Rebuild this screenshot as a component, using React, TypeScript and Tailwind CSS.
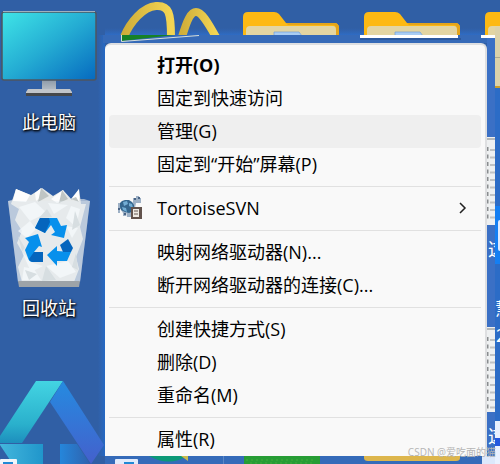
import { Fragment } from "react";
import type { ReactNode } from "react";

const MENU_GROUPS: { label: string; bold?: boolean; active?: boolean; submenu?: boolean }[][] = [
  [
    { label: "打开(O)", bold: true },
    { label: "固定到快速访问" },
    { label: "管理(G)", active: true },
    { label: "固定到“开始”屏幕(P)" },
  ],
  [{ label: "TortoiseSVN", submenu: true }],
  [{ label: "映射网络驱动器(N)..." }, { label: "断开网络驱动器的连接(C)..." }],
  [{ label: "创建快捷方式(S)" }, { label: "删除(D)" }, { label: "重命名(M)" }],
  [{ label: "属性(R)" }],
];

const DOC_LINES = [0, 1, 2, 3, 4, 5, 6, 7, 8, 9];

function Thumbnail({ y, height }: { y: number; height: number }) {
  return (
    <g>
      <rect x="487" y={y} width="8" height={height} fill="#eef0f1" />
      <rect x="487" y={y + 1} width="8" height="2" fill="#b4b8ba" />
      {DOC_LINES.map((i) => (
        <g key={i}>
          <rect x="487" y={y + 10 + i * 7.5} width="1.5" height="4" fill="#8a8d90" />
          <rect x="490" y={y + 12 + i * 7.5} width="5" height="2" fill="#bfc2c4" />
        </g>
      ))}
    </g>
  );
}

function Folder({ x }: { x: number }) {
  return (
    <g transform={`translate(${x} 12)`}>
      <path d="M0 24V5q0-5 5-5h26q3 0 5 2l7 9h48q5 0 5 5v8z" fill="#fdb913" />
      <path d="M43 11h48q5 0 5 5v8h-3v-8q0-3-4-3H45z" fill="#e4a51c" />
      <path d="M3 24v-6q0-4 4-4h83q3 0 3 4v6z" fill="#e3d5a2" />
      <path d="M31 24v-4h25l3 4z" fill="#a9cdf3" stroke="#6f9fd8" strokeWidth=".7" />
    </g>
  );
}

function Wallpaper() {
  return (
    <svg className="absolute left-0 top-0" width="500" height="464" viewBox="0 0 500 464" aria-hidden="true">
      <defs>
        <linearGradient id="glow" x1="0" x2="1" y1="0" y2="0">
          <stop offset="0" stopColor="#2f6bc0" stopOpacity="0" />
          <stop offset="1" stopColor="#2468c4" />
        </linearGradient>
        <linearGradient id="topGlow" x1="0" x2="0" y1="0" y2="1">
          <stop offset="0" stopColor="#3268b8" stopOpacity="0" />
          <stop offset="1" stopColor="#2e6cc5" />
        </linearGradient>
        <linearGradient id="ring" x1="0" x2="1" y1="0" y2="0">
          <stop offset="0" stopColor="#cfae3a" />
          <stop offset="1" stopColor="#f3d553" />
        </linearGradient>
        <linearGradient id="tealLeg" x1="0" x2="0" y1="0" y2="1">
          <stop offset="0" stopColor="#43d4e2" />
          <stop offset=".7" stopColor="#2ab0cc" />
          <stop offset="1" stopColor="#1d8ebd" />
        </linearGradient>
        <linearGradient id="blueLeg" x1="0" x2="0" y1="0" y2="1">
          <stop offset="0" stopColor="#258be0" />
          <stop offset="1" stopColor="#4460cc" />
        </linearGradient>
        <linearGradient id="tealBar" x1="0" x2="1" y1="0" y2="0">
          <stop offset="0" stopColor="#43b6dc" />
          <stop offset="1" stopColor="#2096cb" />
        </linearGradient>
        <linearGradient id="blueBar" x1="0" x2="1" y1="0" y2="0">
          <stop offset="0" stopColor="#2586db" />
          <stop offset="1" stopColor="#2f62ad" />
        </linearGradient>
        <clipPath id="strip">
          <rect x="487" y="225" width="8" height="225" />
        </clipPath>
      </defs>

      <rect x="98" y="35" width="7" height="421" fill="url(#glow)" />
      <rect x="105" y="28" width="395" height="7" fill="url(#topGlow)" />
      <g fill="none" stroke="url(#ring)" strokeWidth="8">
        <path d="M124 37C130 22 143 7 156 6C169 5 171 13 171 37" />
        <path d="M182 37C187 20 191 12 196 12C202 12 208 23 216 37" />
      </g>
      <Folder x={243} />
      <Folder x={364} />
      <Folder x={485} />
      <rect x="103" y="35" width="397" height="8" fill="#366ab8" />
      <path d="M121 35h53l-52 6h-1z" fill="#168126" />
      <path d="M121.500 35v6.500L199 35.500" fill="none" stroke="#d6dfdb" strokeWidth="1" />
      <rect x="360" y="38" width="101" height="2" fill="#264f8b" opacity=".6" />
      <rect x="360" y="35" width="98" height="3" fill="#fff" />
      <rect x="481" y="35" width="14" height="3" fill="#fff" />

      <rect x="487" y="38" width="8" height="426" fill="#3b70c5" />
      <rect x="495" y="88" width="5" height="376" fill="#2c6cc6" />
      <rect x="495" y="27" width="5" height="61" fill="#dcd2aa" />
      <rect x="495" y="57" width="5" height="1" fill="#b0aa8e" />
      <rect x="495" y="86" width="5" height="2" fill="#c99d2b" />
      <Thumbnail y={137} height={88} />
      <Thumbnail y={327} height={85} />
      <rect x="495" y="206" width="5" height="58" fill="#157ff2" />
      <rect x="498" y="220" width="4" height="31" rx="2" fill="#dfeaff" />
      <g fill="#fff" className="font-['Noto_Sans_CJK_SC',sans-serif] text-lg">
        <text x="488" y="256" clipPath="url(#strip)">这</text>
        <text x="488" y="443" clipPath="url(#strip)">这</text>
        <text x="495" y="316">慧</text>
        <text x="496" y="342">2</text>
      </g>

      <rect x="105" y="456" width="382" height="8" fill="#356bb9" />
      <path d="M149 456h38q-18 11-38 0" fill="#0c9977" />
      <path d="M181 456h7v5z" fill="#c9bb4c" />
      <path d="M223.500 456v8" stroke="#5b87c5" />
      <rect x="244" y="456" width="76" height="8" fill="#279d35" />
      <path d="M246 460h70M250 463h64" stroke="#45ad3d" strokeDasharray="2 3" />
      <path d="M364 456h96v2q0 3-4 3h-88q-4 0-4-3z" fill="#ddb64d" />
      <rect x="482" y="456" width="18" height="8" fill="#dce8fb" />
      <rect x="495" y="421" width="5" height="43" fill="#e9f1ff" />
      <rect x="495" y="438" width="5" height="8" fill="#2458df" />

      <path d="M36 381h27L22 443H0v-7z" fill="url(#tealLeg)" />
      <path d="M63 381L104 445L91 464L50 402z" fill="url(#blueLeg)" />
      <path d="M0 444h43v20H0z" fill="url(#tealBar)" />
      <path d="M0 445L10 460H0z" fill="#315fa5" />
      <path d="M60 444h17l13 20H60z" fill="url(#blueBar)" />
      <rect x="0" y="459" width="17" height="7" rx="1" fill="#f0f5fa" />
      <rect x="3" y="462" width="10" height="2" fill="#2089d5" />
      <rect x="115" y="459" width="23" height="7" rx="1" fill="#e1ebfb" />
      <rect x="124" y="462" width="10" height="2" fill="#2089d5" />
    </svg>
  );
}

function ComputerIcon() {
  return (
    <svg width="98" height="96" viewBox="0 0 98 96" aria-hidden="true">
      <defs>
        <linearGradient id="screen" x1="0" y1="0" x2="1" y2="1">
          <stop offset="0" stopColor="#3fe5e7" />
          <stop offset=".5" stopColor="#24acd3" />
          <stop offset="1" stopColor="#0669bf" />
        </linearGradient>
        <linearGradient id="stand" x1="0" y1="0" x2="0" y2="1">
          <stop offset="0" stopColor="#8d9aa8" />
          <stop offset="1" stopColor="#b9c0c8" />
        </linearGradient>
      </defs>
      <rect x="42" y="72" width="14" height="11" fill="url(#stand)" />
      <path d="M28 81h42l2 3v2H26v-2z" fill="#c1c5ca" />
      <rect x="26" y="85" width="46" height="3" fill="#46484b" />
      <rect x="2" y="4" width="94" height="68" rx="2" fill="url(#screen)" stroke="#4d5660" strokeWidth="1.500" />
      <path d="M3 3.500h92" stroke="#a1afbd" />
    </svg>
  );
}

function RecycleBinIcon() {
  return (
    <svg width="98" height="103" viewBox="0 0 98 103" aria-hidden="true">
      <path d="M8 14l7-2h69l6 2-10 81H18z" fill="#a3b6d0" />
      <path d="M11 17L16 2L31 8L42 1L53 9L63 3L72 13L79 2L81 17L86 17L80 40L83 52L76 70L79 82L74 95H22L18 80L24 68L17 56L22 44L15 33L19 22z" fill="#e6e9e9" />
      <path d="M16 2l14 6-4 7-13-1zM35 6l6-5 3 7-8 6zM51 12l12-9 3 9-9 4zM71 12l8-10v12z" fill="#fdfdfd" />
      <path d="M41 1l8 8-11 6zM62 3l6 9-9 4zM71 12l5-2 3 5z" fill="#bfc5c4" />
      <path d="M19 20l16-5 12 11-17 8zM48 16l20 2-14 9zM71 19l9 3-4 18-10-9zM18 44l12-10 6 8-9 9zM66 39l12 2-6 10zM22 65l11 11 10 3-12 6zM46 79l22-5 8 11-16 6zM24 80l10 2 7 11H22z" fill="#fff" opacity=".75" />
      <path d="M47 22l5 8-13 1zM75 24l5 14-8 5zM18 49l7 12-3 3zM76 66l-4 14 6 3zM46 79l10 14-14 1zM25 83l12 4-8 6z" fill="#cfd6d7" />
      <path d="M8 14h82L80 95H18z" fill="#e6edf4" opacity=".35" />
      <path d="M18 94h62l-1 6H19z" fill="#9da3a8" />
      <path d="M40 31h17l4 8 6-1-3 13-13-3 4-3-4-7-6 8-10-5z" fill="#0790ec" />
      <path d="M40 31h9l1 4-5 11-10-5z" fill="#0565bd" />
      <path d="M25 51l13-4 4 13-3-1-5 6h9v10H33q-4 0-5-4l-3-8 4-8z" fill="#0790ec" />
      <path d="M34 65h9v10H33q-3 0-4-3z" fill="#0565bd" />
      <path d="M47 68l10-9v5l14 1-4 9H57v5z" fill="#0790ec" />
      <path d="M60 58l8-6 5 9-2 4h-8z" fill="#0565bd" />
    </svg>
  );
}

function TortoiseIcon() {
  return (
    <svg width="26" height="26" viewBox="0 0 26 26" aria-hidden="true">
      <path d="M16 6V3h3V1h3v2h2v5h-5l-1 5h-3zM1 11h4v3H3v4H1zM4 15h5v6H6v-3zM9 16h5v6h-4zM1 8h3v4H1z" fill="#9db0c5" />
      <path d="M3 10V8l2-2 3-1h4l3 2 2 3v6l-5 2-4-1-4-2-1-3z" fill="#34668e" />
      <path d="M6 7l4-1 1 3-4 2zM12 8l3 1 1 4-4-2zM5 12l4 1 1 4-4-2z" fill="#72add4" />
      <path d="M17 3h2v2h-2zM21 2h2v2h-2zM1 13h2v2H1zM7 18h2v2H7z" fill="#4a6485" />
      <path d="M14 12h11v12H14z" fill="#62534d" />
      <path d="M16 14h6v8h-6z" fill="#eeeae4" />
      <path d="M17 16h4M17 19h4" stroke="#665b54" />
    </svg>
  );
}

function DesktopItem({ label, children }: { label: string; children: ReactNode }) {
  return (
    <a href="#" className="flex w-full flex-col items-center gap-2">
      {children}
      <span className="text-lg leading-5 text-white [text-shadow:1px_1px_2px_#000,0_1px_3px_#000]">{label}</span>
    </a>
  );
}

export default function App() {
  return (
    <main className="relative min-h-screen overflow-hidden bg-[#305fa5] font-['Open_Sans','Noto_Sans_CJK_SC',sans-serif]">
      <Wallpaper />

      <div className="relative flex w-[98px] flex-col gap-[55px] pt-2">
        <DesktopItem label="此电脑">
          <ComputerIcon />
        </DesktopItem>
        <DesktopItem label="回收站">
          <RecycleBinIcon />
        </DesktopItem>
      </div>

      <div
        role="menu"
        className="absolute left-[105px] right-[13px] top-[43px] rounded-t-md border-r-2 border-t-2 border-[#dedfe1] bg-[#f9f9f9] px-1 pt-1 text-lg text-black"
      >
        {MENU_GROUPS.map((group, i) => (
          <Fragment key={i}>
            {i > 0 && <hr className="my-[5px] border-t border-[#e1e1e1]" />}
            {group.map((item) => (
              <button
                key={item.label}
                type="button"
                role="menuitem"
                className={`flex h-[33px] w-full items-center rounded pb-0.5 pr-3 text-left leading-6 ${
                  item.active ? "bg-[#efefef]" : ""
                } ${item.bold ? "font-bold" : ""}`}
              >
                <span className="flex w-12 shrink-0 items-center pl-2">{item.submenu && <TortoiseIcon />}</span>
                <span className="grow whitespace-nowrap">{item.label}</span>
                {item.submenu && (
                  <svg width="12" height="14" viewBox="0 0 12 14" fill="none" stroke="#222" strokeWidth="1.500">
                    <path d="M3 2l5 5-5 5" />
                  </svg>
                )}
              </button>
            ))}
          </Fragment>
        ))}
      </div>

      <span className="absolute right-1 top-[444px] text-[10px] leading-4 text-[#b5b5b5]">CSDN @爱吃面的猫</span>
    </main>
  );
}
